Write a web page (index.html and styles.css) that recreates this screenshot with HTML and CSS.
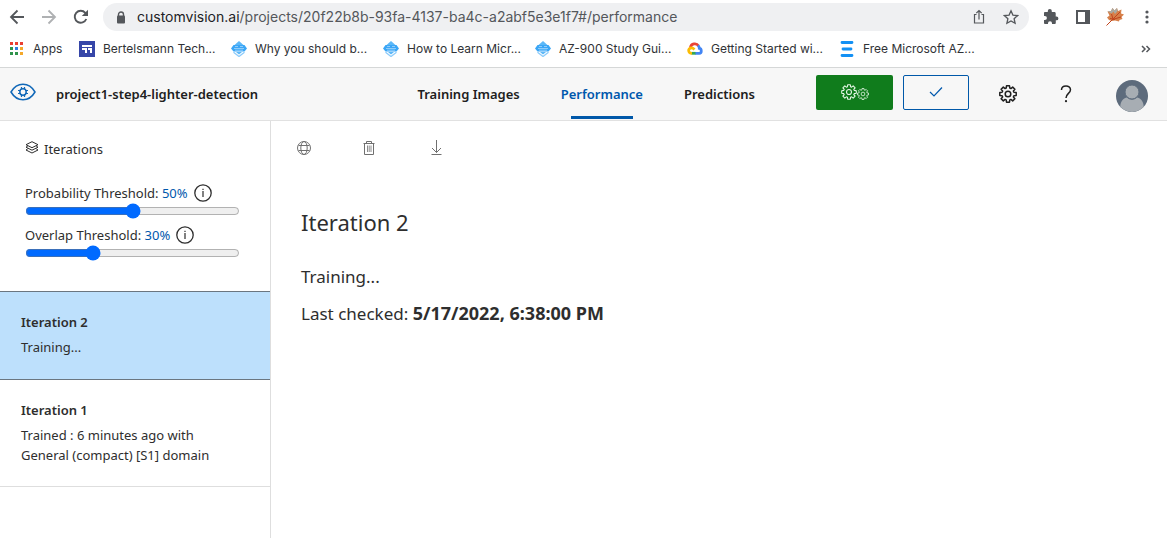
FILE: index.html
```html
<!DOCTYPE html>
<html lang="en">
<head>
<meta charset="utf-8">
<title>Custom Vision - Performance</title>
<link rel="stylesheet" href="styles.css">
</head>
<body>
<svg class="defs" aria-hidden="true">
  <symbol id="gear" viewBox="-9 -9 18 18">
    <path d="M-1.8-5.9-1.5-8.2H1.5L1.8-5.9 2.9-5.4 4.7-6.9 6.9-4.7 5.4-2.9 5.9-1.8 8.2-1.5V1.5L5.9 1.8 5.4 2.9 6.9 4.7 4.7 6.9 2.9 5.4 1.8 5.9 1.5 8.2H-1.5L-1.8 5.9-2.9 5.4-4.7 6.9-6.9 4.7-5.4 2.9-5.9 1.8-8.2 1.5V-1.5L-5.9-1.8-5.4-2.9-6.9-4.7-4.7-6.9-2.9-5.4Z" fill="none" stroke="currentColor" stroke-linejoin="round"/>
    <circle r="2.8" fill="none" stroke="currentColor"/>
  </symbol>
  <symbol id="learn" viewBox="0 0 16 16">
    <path d="M8 0 13 4.500H3Z" fill="#5cb8f8"/>
    <path d="M2.500 4h11L16 7.500 13.500 10.500h-11L0 7.500Z" fill="#3aa6f6"/>
    <path d="M3 7.500h10M4 5.500h3m2 0h3M4 9.200h8" stroke="#a4d6fb" stroke-width=".8"/>
    <path d="M2.500 11.200 8 15.500 13.500 11.200" fill="none" stroke="#8ccbfa" stroke-width="1.300"/>
    <path d="M5 11h6L8 13.500Z" fill="#5cb8f8"/>
  </symbol>
</svg>

<div class="browser">
  <div class="toolbar">
    <button class="tool" aria-label="Back"><svg width="16" height="16" viewBox="0 0 16 16"><path d="M15 8H2M8.500 1.500 2 8l6.500 6.500" fill="none" stroke="currentColor" stroke-width="1.800"/></svg></button>
    <button class="tool tool-off" aria-label="Forward"><svg width="16" height="16" viewBox="0 0 16 16"><path d="M1 8h13M7.500 1.500 14 8l-6.500 6.500" fill="none" stroke="currentColor" stroke-width="1.800"/></svg></button>
    <button class="tool" aria-label="Reload"><svg width="16" height="16" viewBox="0 0 16 16"><path d="M13.300 10A6 6 0 1 1 12.300 3.800L14 5.500" fill="none" stroke="currentColor" stroke-width="1.900"/><path d="M15 .8V7H8.800Z" fill="currentColor"/></svg></button>
    <div class="address">
      <svg width="10" height="13" viewBox="0 0 10 13"><path d="M2.500 5V3.500a2.500 2.500 0 0 1 5 0V5" fill="none" stroke="currentColor" stroke-width="1.400"/><rect x="1" y="4.500" width="8" height="8" rx="1" fill="currentColor"/></svg>
      <span class="url"><span class="host">customvision.ai</span>/projects/20f22b8b-93fa-4137-ba4c-a2abf5e3e1f7#/performance</span>
      <button class="tool" aria-label="Share"><svg width="16" height="16" viewBox="0 0 16 16"><path d="M5.500 5.500h-2v8.500h9v-8.500h-2M8 10.500V1.800M5.300 4.200 8 1.500l2.700 2.700" fill="none" stroke="currentColor" stroke-width="1.200"/></svg></button>
      <button class="tool" aria-label="Bookmark this page"><svg width="16" height="16" viewBox="0 0 16 16"><path d="m8 1.800 1.900 4.300 4.700.5-3.500 3.100 1 4.600L8 11.900l-4.100 2.400 1-4.600L1.400 6.600l4.700-.5Z" fill="none" stroke="currentColor" stroke-width="1.300"/></svg></button>
    </div>
    <button class="tool" aria-label="Extensions"><svg width="16" height="16" viewBox="0 0 16 16"><path d="M13.500 7.500h-.8V4.300c0-.7-.5-1.300-1.200-1.300H8.800v-.9a2 2 0 0 0-4 0V3H2.100C1.400 3 1 3.500 1 4.200v2.700h.9a2 2 0 0 1 0 4H1v2.800c0 .7.500 1.300 1.200 1.300H5v-.8a2 2 0 0 1 4 0v.8h2.600c.7 0 1.200-.6 1.200-1.300v-2.400h.7a1.900 1.900 0 0 0 0-3.800Z" fill="currentColor"/></svg></button>
    <button class="tool" aria-label="Side panel"><svg width="16" height="16" viewBox="0 0 16 16"><path d="M1 1h14v14H1ZM3 3v10h7V3Z" fill="currentColor" fill-rule="evenodd"/></svg></button>
    <button class="tool" aria-label="Profile"><svg class="leaf" width="18" height="18" viewBox="0 0 18 18"><path d="M1.500 3.500 5 3 6.500 0 8.500 2.500 11 0 12 3 15.500 1.500 15 5.500 18 6.500 15.500 9 16.500 11 13.500 12 13 13.500 9 12.500 6 13 3 12 1 9.500 3.500 7.500Z" fill="#d6804a"/><path d="M1.500 3.500 5 3 6.500 0 8.500 2.500 11 0 11.500 3 9 6 7.500 3.500 5.500 5.500Z" fill="#a9aaa2"/><path d="M.5 17.500 6 12 14 4M6.500 11.500 15 9M7 11 5.500 6M4 10.500l5 1" fill="none" stroke="#c0431d"/></svg></button>
    <button class="tool" aria-label="Menu"><svg width="16" height="16" viewBox="0 0 16 16" fill="currentColor"><circle cx="8" cy="3" r="1.600"/><circle cx="8" cy="8" r="1.600"/><circle cx="8" cy="13" r="1.600"/></svg></button>
  </div>
  <nav class="bookmarks" aria-label="Bookmarks">
    <a class="bookmark apps" href="#"><svg width="14" height="14" viewBox="0 0 14 14"><path d="M0 0h3v3H0ZM5 0h3v3H5ZM10 0h3v3H10Z" fill="#ea3f33"/><path d="M0 5h3v3H0ZM0 10h3v3H0ZM5 10h3v3H5Z" fill="#2f934c"/><path d="M5 5h3v3H5Z" fill="#2f7de1"/><path d="M10 5h3v3H10ZM10 10h3v3H10Z" fill="#f4a82a"/></svg>Apps</a>
    <a class="bookmark" href="#"><svg width="16" height="16" viewBox="0 0 16 16"><path d="M0 0h16v16H0Z" fill="#3646a8"/><path d="M3 4h10v2H3ZM3 7h5v5H6V9H3ZM9 7h4v5H11V9H9Z" fill="#fff"/></svg>Bertelsmann Tech...</a>
    <a class="bookmark" href="#"><svg width="16" height="16"><use href="#learn"/></svg>Why you should b...</a>
    <a class="bookmark" href="#"><svg width="16" height="16"><use href="#learn"/></svg>How to Learn Micr...</a>
    <a class="bookmark" href="#"><svg width="16" height="16"><use href="#learn"/></svg>AZ-900 Study Gui...</a>
    <a class="bookmark" href="#"><svg width="16" height="16" viewBox="0 0 16 16" fill="none" stroke-width="2.800"><path d="M3.500 6.500C4 2.500 9.500 1.500 11.500 5" stroke="#ea4335"/><path d="M11 4.500c1 .8 1.300 1.800 1.300 2.800 2.600.2 2.600 5 0 5H8" stroke="#4285f4"/><path d="M8.500 12.300H4.500" stroke="#34a853"/><path d="M5 12.300C1 12.300.5 7.500 4 7c1.500-.2 2.500.5 3.500 1.500" stroke="#fbbc04"/></svg>Getting Started wi...</a>
    <a class="bookmark" href="#"><svg width="16" height="16" viewBox="0 0 16 16"><path d="M3 1.500h10M4 8h8M3 14.500h10" stroke="#1390f4" stroke-width="2.800" stroke-linecap="round"/></svg>Free Microsoft AZ...</a>
    <button class="tool more" aria-label="More bookmarks"><svg width="10" height="8" viewBox="0 0 10 8"><path d="m1 1 3 3-3 3M5.500 1l3 3-3 3" fill="none" stroke="currentColor" stroke-width="1.500"/></svg></button>
  </nav>
</div>

<header class="header">
  <a class="logo" href="#" aria-label="Custom Vision"><svg width="26" height="18" viewBox="0 0 26 18" fill="none" stroke="currentColor"><path d="M1 9C7-1.300 19-1.300 25 9 19 19.300 7 19.300 1 9Z" stroke-width="1.500"/><circle cx="13" cy="9" r="3.200" stroke-width="1.500"/><path d="M11.500 4v2m3-2v2m-3 6v2m3-2v2M8 7.500h2m-2 3h2m6-3h2m-2 3h2" stroke-width="1.200"/></svg></a>
  <span class="project">project1-step4-lighter-detection</span>
  <nav class="tabs" aria-label="Project">
    <a class="tab" href="#">Training Images</a>
    <a class="tab active" href="#" aria-current="page">Performance</a>
    <a class="tab" href="#">Predictions</a>
  </nav>
  <div class="actions">
    <button class="train" aria-label="Train"><svg width="16" height="16"><use href="#gear"/></svg><svg class="small-gear" width="12" height="12"><use href="#gear"/></svg></button>
    <button class="quick-test" aria-label="Quick test"><svg width="14" height="12" viewBox="0 0 14 12"><path d="m1 6 4 4 8-8.500" fill="none" stroke="currentColor" stroke-width="1.200"/></svg></button>
  </div>
  <button class="icon-button" aria-label="Settings"><svg class="settings" width="18" height="18"><use href="#gear"/></svg></button>
  <button class="icon-button" aria-label="Help"><svg width="12" height="18" viewBox="0 0 12 18"><path d="M1.500 5C1.500-.3 10.500-.3 10.500 4.800 10.500 8.300 6 8.500 6 13" fill="none" stroke="currentColor" stroke-width="1.500"/><circle cx="6" cy="16.200" r="1.100" fill="currentColor"/></svg></button>
  <button class="avatar" aria-label="Account"><svg width="32" height="32" viewBox="0 0 32 32"><circle cx="16" cy="16" r="16" fill="#5d6b7c"/><path d="M4.300 26.800C4.500 20.500 8 18 11 17.500c3 3 7 3 10 0 3 .5 6.500 3 6.700 9.300A16 16 0 0 1 4.300 26.800Z" fill="#a7adb3"/><circle cx="16" cy="12" r="7" fill="#a7adb3" stroke="#5d6b7c"/></svg></button>
</header>

<main class="workspace">
  <aside class="sidebar">
    <div class="filters">
      <h2 class="side-title"><svg width="14" height="13" viewBox="0 0 14 13" fill="none" stroke="currentColor"><path d="M7 .7 13 3.700 7 6.700 1 3.700ZM2.800 5 1 6.200l6 3 6-3L11.200 5M2.800 7.800 1 9l6 3 6-3-1.800-1.200"/></svg>Iterations</h2>
      <div class="threshold">
        <div class="threshold-label"><label for="probability">Probability Threshold: <b>50%</b></label><button class="info" aria-label="About probability threshold"><svg width="18" height="18" viewBox="0 0 18 18"><circle cx="9" cy="9" r="8.200" fill="none" stroke="currentColor" stroke-width="1.300"/><path d="M9 7v6M9 4.800v1.200" stroke="currentColor" stroke-width="1.200"/></svg></button></div>
        <input class="slider" id="probability" type="range" min="0" max="100" value="50">
      </div>
      <div class="threshold">
        <div class="threshold-label"><label for="overlap">Overlap Threshold: <b>30%</b></label><button class="info" aria-label="About overlap threshold"><svg width="18" height="18" viewBox="0 0 18 18"><circle cx="9" cy="9" r="8.200" fill="none" stroke="currentColor" stroke-width="1.300"/><path d="M9 7v6M9 4.800v1.200" stroke="currentColor" stroke-width="1.200"/></svg></button></div>
        <input class="slider" id="overlap" type="range" min="0" max="100" value="30">
      </div>
    </div>
    <a class="iteration selected" href="#"><strong>Iteration 2</strong><span>Training...</span></a>
    <a class="iteration" href="#"><strong>Iteration 1</strong><span>Trained : 6 minutes ago with General (compact) [S1] domain</span></a>
  </aside>
  <section class="content">
    <div class="commands">
      <button class="command" aria-label="Publish"><svg width="16" height="16" viewBox="0 0 16 16" fill="none" stroke="currentColor"><circle cx="8" cy="8" r="6.500"/><ellipse cx="8" cy="8" rx="3.200" ry="6.500"/><path d="M2.500 5.500h11m-11 5h11"/></svg></button>
      <button class="command" aria-label="Delete"><svg width="16" height="16" viewBox="0 0 16 16" fill="none" stroke="currentColor"><path d="M1.500 3.500h11M2.500 3.500v11h9v-11M4.500 3.500v-2h5v2"/><path d="M5.500 5.500V12M7.200 5.500V12M9 5.500V12" stroke-width=".8"/></svg></button>
      <button class="command" aria-label="Export"><svg width="16" height="16" viewBox="0 0 16 16" fill="none" stroke="currentColor"><path d="M8.500 0v12.500M4 8l4.500 4.500L13 8M3.500 14.500h10"/></svg></button>
    </div>
    <h1>Iteration 2</h1>
    <p>Training...</p>
    <p>Last checked: <strong class="checked-at">5/17/2022, 6:38:00 PM</strong></p>
  </section>
</main>
</body>
</html>
```
FILE: styles.css
```css
* { box-sizing: border-box; }

body {
  margin: 0;
  min-height: 100vh;
  display: flex;
  flex-direction: column;
  background: #fff;
  color: #2e2e2e;
  font: 13px/20px "Noto Sans", "Open Sans", sans-serif;
}

button {
  display: flex;
  align-items: center;
  justify-content: center;
  padding: 0;
  border: 0;
  background: none;
  color: inherit;
}

a { color: inherit; text-decoration: none; }
svg { flex: none; display: block; }
.defs { position: absolute; width: 0; height: 0; }

.browser {
  border-bottom: 1px solid #d5d7d7;
  color: #303236;
  font-family: Inter, Roboto, sans-serif;
}

.toolbar {
  display: flex;
  align-items: center;
  gap: 16px;
  height: 34px;
  padding: 0 12px 0 9px;
}

.tool { color: #54575b; }
.tool-off { color: #afb1b3; }
.leaf { margin: 0 -1px; }

.address {
  flex: 1;
  display: flex;
  align-items: center;
  gap: 16px;
  height: 28px;
  margin: 0 -2px;
  padding: 0 10px 0 13px;
  border-radius: 14px;
  background: #eff0f2;
  color: #54575b;
}

.url {
  flex: 1;
  margin-left: -5px;
  font-size: 14px;
  white-space: nowrap;
}

.host { color: #202124; }

.bookmarks {
  display: flex;
  align-items: center;
  height: 33px;
  padding: 0 16px 4px 10px;
}

.bookmark {
  display: flex;
  align-items: center;
  gap: 8px;
  width: 152px;
  font-size: 12px;
  white-space: nowrap;
}

.apps { width: 69px; gap: 9px; }
.more { margin-left: auto; }

.header {
  display: flex;
  align-items: center;
  height: 53px;
  padding: 0 19px 0 10px;
  border-bottom: 1px solid #e1e1e1;
  background: #f7f7f7;
  color: #202020;
}

.logo { margin-bottom: 4px; color: #1168b8; }

.project {
  margin-left: 20px;
  font-weight: 600;
}

.tabs {
  align-self: stretch;
  display: flex;
  gap: 41px;
  margin-left: auto;
}

.tab {
  position: relative;
  display: flex;
  align-items: center;
  font-weight: 600;
}

.active { color: #0058ad; }

.active::after {
  content: "";
  position: absolute;
  right: 10px;
  bottom: 1px;
  left: 10px;
  height: 3px;
  background: #0058a9;
}

.actions {
  display: flex;
  gap: 10px;
  margin: 0 30px 4px 61px;
}

.train {
  width: 77px;
  height: 35px;
  border-radius: 2px;
  background: #107c1c;
  color: #e8f8e8;
}

.train svg { stroke-width: 1.2; }
.small-gear { margin-top: 3px; }

.quick-test {
  width: 66px;
  height: 35px;
  border: 1px solid #0058a9;
  border-radius: 2px;
  color: #0058ad;
}

.icon-button { width: 18px; margin-right: 40px; }
.settings { stroke-width: 1.5; }
.avatar { margin: 4px 0 0 1px; }

.workspace { flex: 1; display: flex; }

.sidebar {
  width: 271px;
  border-right: 1px solid #dedede;
}

.filters { height: 170px; padding: 18px 30px 0 25px; }

.side-title {
  display: flex;
  align-items: center;
  gap: 5px;
  margin: 0 0 24px;
  font-size: 13px;
  font-weight: 400;
}

.side-title svg { margin-bottom: 4px; }

.threshold-label {
  display: flex;
  align-items: center;
  gap: 6px;
  height: 20px;
}

.threshold-label b { color: #0058ad; font-weight: 400; }

.threshold { height: 42px; }

.slider {
  display: block;
  width: 100%;
  height: 16px;
  margin: 0;
  accent-color: #006aff;
}

.iteration {
  display: block;
  padding: 20px 50px 21px 21px;
  border-bottom: 1px solid #dedede;
}

.iteration strong, .iteration span { display: block; }
.iteration strong { margin-bottom: 5px; font-weight: 600; }

.selected {
  padding-bottom: 22px;
  border-top: 1px solid #6b7680;
  border-bottom-color: #6b7680;
  background: #bde0fc;
}

.content { flex: 1; padding: 19px 25px; }

.commands {
  display: flex;
  gap: 50px;
  color: #707070;
}

h1 {
  margin: 50px 5px 25px;
  font-size: 22px;
  font-weight: 400;
  line-height: 32px;
}

p {
  margin: 0 5px 8px;
  font-size: 17px;
  line-height: 28px;
}

.checked-at { font-size: 18px; }
```
